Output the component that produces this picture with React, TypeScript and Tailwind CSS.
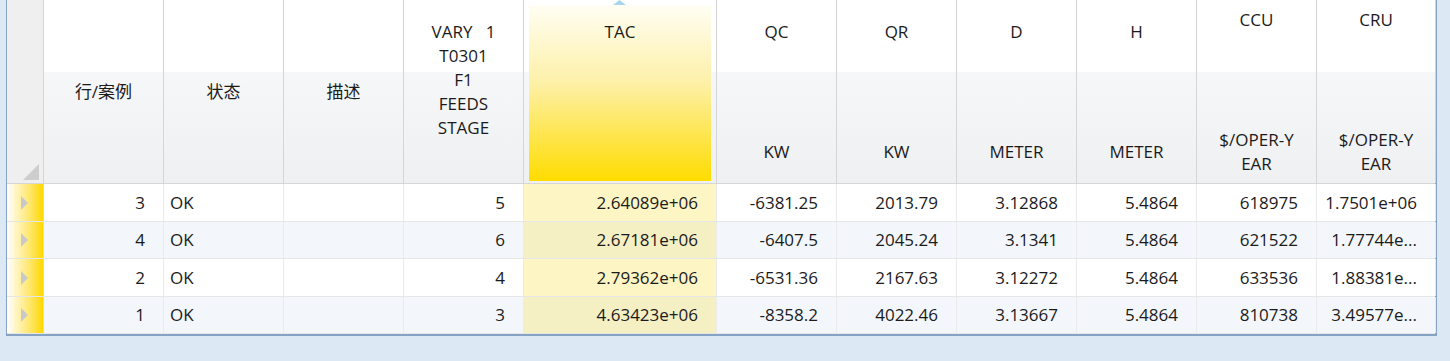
import React from 'react'

type Col = {
  width: string
  name: string[]
  unit: string[]
  plain?: boolean
  align: 'left' | 'right'
  tac?: boolean
}

const cols: Col[] = [
  { width: 'w-[120px]', name: ['行/案例'], unit: [], plain: true, align: 'right' },
  { width: 'w-[120px]', name: ['状态'], unit: [], plain: true, align: 'left' },
  { width: 'w-[120px]', name: ['描述'], unit: [], plain: true, align: 'left' },
  { width: 'w-[120px]', name: ['VARY   1', 'T0301', 'F1', 'FEEDS', 'STAGE'], unit: [''], align: 'right' },
  { width: 'w-[193px]', name: ['TAC'], unit: [''], align: 'right', tac: true },
  { width: 'w-[120px]', name: ['QC'], unit: ['KW'], align: 'right' },
  { width: 'w-[120px]', name: ['QR'], unit: ['KW'], align: 'right' },
  { width: 'w-[120px]', name: ['D'], unit: ['METER'], align: 'right' },
  { width: 'w-[120px]', name: ['H'], unit: ['METER'], align: 'right' },
  { width: 'w-[120px]', name: ['CCU'], unit: ['$/OPER-Y', 'EAR'], align: 'right' },
  { width: 'w-[119px]', name: ['CRU'], unit: ['$/OPER-Y', 'EAR'], align: 'right' },
]

// CRU values wider than the column are shown clipped, as in the grid
const rows: string[][] = [
  ['3', 'OK', '', '5', '2.64089e+06', '-6381.25', '2013.79', '3.12868', '5.4864', '618975', '1.7501e+06'],
  ['4', 'OK', '', '6', '2.67181e+06', '-6407.5', '2045.24', '3.1341', '5.4864', '621522', '1.77744e...'],
  ['2', 'OK', '', '4', '2.79362e+06', '-6531.36', '2167.63', '3.12272', '5.4864', '633536', '1.88381e...'],
  ['1', 'OK', '', '3', '4.63423e+06', '-8358.2', '4022.46', '3.13667', '5.4864', '810738', '3.49577e...'],
]

function HeaderText({ col }: { col: Col }) {
  if (col.plain) {
    return <div className="leading-[24px]">{col.name[0]}</div>
  }
  return (
    <div className="flex flex-col items-center leading-[24px]">
      <div className="flex h-[120px] flex-col items-center">
        {col.name.map((l, i) => (
          <div key={i} className="whitespace-pre">
            {l}
          </div>
        ))}
      </div>
      {col.unit.map((l, i) => (
        <div key={i} className="h-[24px] whitespace-pre">
          {l}
        </div>
      ))}
    </div>
  )
}

function HeaderCell({ col }: { col: Col }) {
  if (col.tac) {
    return (
      <div className={`${col.width} relative h-[183px] shrink-0 border-r border-[#d5d5d5] bg-[linear-gradient(to_bottom,#ffffff_72px,#f6f7f8_72px,#eff0f2)] px-[5px] pt-[5px] pb-[2px]`}>
        <svg className="absolute top-0 left-[89px]" width="13" height="5" viewBox="0 0 13 5">
          <path d="M6.5 0 L13 5 L0 5 Z" fill="#a8d5ee" />
        </svg>
        <div className="flex h-full items-center justify-center bg-[linear-gradient(to_bottom,#fffef4,#fdf0a6_45%,#ffdc00)] pb-[3px]">
          <HeaderText col={col} />
        </div>
      </div>
    )
  }
  return (
    <div className={`${col.width} flex h-[183px] shrink-0 items-center justify-center border-r border-[#d5d5d5] bg-[linear-gradient(to_bottom,#ffffff_72px,#f6f7f8_72px,#eff0f2)]`}>
      <HeaderText col={col} />
    </div>
  )
}

export default function App() {
  return (
    <div
      className="h-[361px] w-[1450px] overflow-hidden bg-[#dde8f5] pl-[6px] text-[17px] text-[#1b1b1b]"
      style={{ fontFamily: '"Open Sans", "Noto Sans CJK SC", sans-serif' }}
    >
      <div className="w-[1431px] border-r-2 border-b-2 border-l border-[#86a3c6] bg-white">
        {/* Header */}
        <div className="flex border-b border-[#d6d6d6]">
          <div className="flex h-[183px] w-[37px] shrink-0 items-end justify-end border-r border-[#d5d5d5] bg-[#efefef] pr-[4px] pb-[3px]">
            <svg width="16" height="16" viewBox="0 0 16 16">
              <path d="M16 0 L16 16 L0 16 Z" fill="#cdcdcd" />
            </svg>
          </div>
          {cols.map((c, i) => (
            <HeaderCell key={i} col={c} />
          ))}
        </div>

        {/* Rows */}
        {rows.map((r, ri) => {
          const h = ri % 2 === 0 ? 'h-[37px] leading-[37px]' : 'h-[36px] leading-[36px]'
          return (
            <div key={ri} className={`flex border-b border-[#e6e6e6] ${ri % 2 === 1 ? 'bg-[#f3f7fc]' : 'bg-white'}`}>
              <div className={`${h} flex w-[37px] shrink-0 items-center border-r border-[#dadada] bg-[linear-gradient(to_right,#ffffff,#ffe45a_70%,#ffd800)] pl-[14px]`}>
                <svg width="7" height="14" viewBox="0 0 7 14">
                  <path d="M0 0 L7 7 L0 14 Z" fill="#c9c9c9" />
                </svg>
              </div>
              {cols.map((c, ci) => (
                <div
                  key={ci}
                  className={`${c.width} ${h} shrink-0 overflow-hidden border-r border-[#ebebeb] text-ellipsis whitespace-nowrap ${
                    c.align === 'right' ? 'pr-[18px] pl-[6px] text-right' : 'pl-[6px] text-left'
                  } ${c.tac ? (ri % 2 === 1 ? 'bg-[#f5efc4]' : 'bg-[#fdf5c3]') : ''}`}
                >
                  {r[ci]}
                </div>
              ))}
            </div>
          )
        })}
      </div>
    </div>
  )
}
